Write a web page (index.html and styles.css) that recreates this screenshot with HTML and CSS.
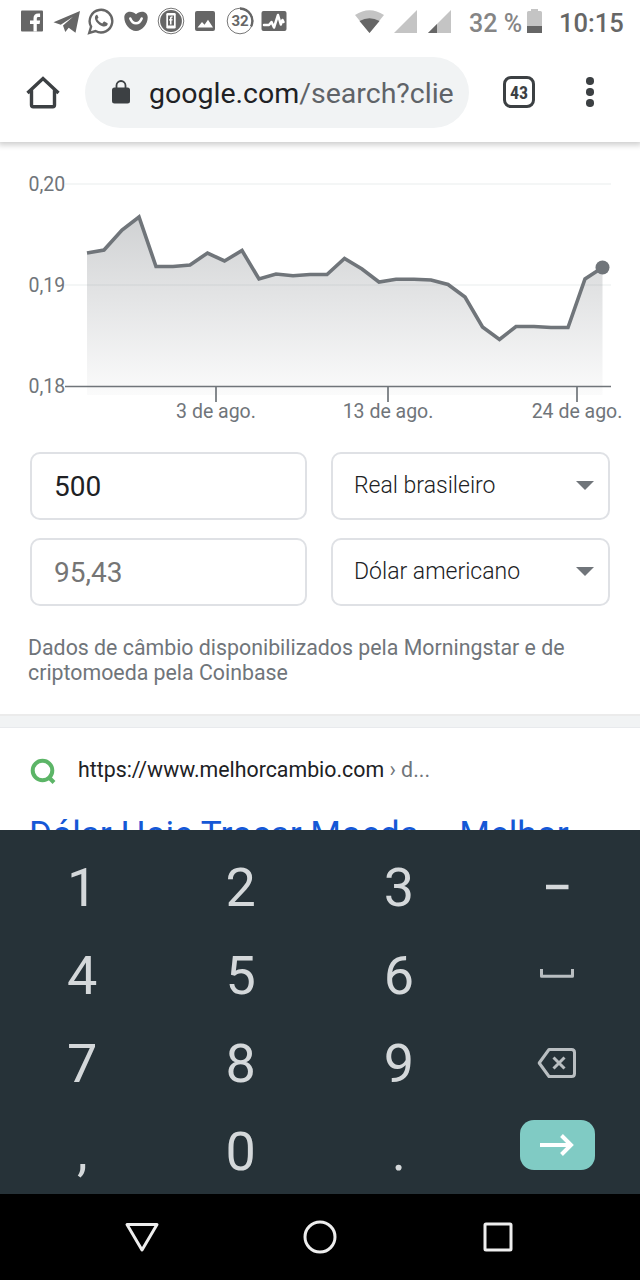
FILE: index.html
```
<!DOCTYPE html>
<html lang="pt-BR">
<head>
    <meta charset="UTF-8">
    <meta name="viewport" content="width=device-width, initial-scale=1.0">
    <title>Real brasileiro para Dólar americano</title>
    <link rel="stylesheet" href="styles.css">
</head>
<body>

<!-- Status bar -->
<div class="status-bar">
    <div class="notifications">
        <svg class="status-icon" viewBox="0 0 28 28">
            <rect x="3" y="3.500" width="22" height="21" rx="1"/>
            <path class="cut" d="M15.500 24.500V17H12v-3.500h3.500v-2.200c0-3.300 1.800-4.800 4.600-4.800h2V10h-1.600c-1.300 0-1.700.6-1.700 1.700v1.800h3.300l-.5 3.500h-2.800v7.500z"/>
        </svg>
        <svg class="status-icon" viewBox="0 0 28 28">
            <path d="M.5 15.200 27 4l-4.500 21.800-6.800-5-3.400 4.200-2.300-6.600L20 9.800 7.800 17.700z"/>
        </svg>
        <svg class="status-icon" viewBox="0 0 28 28">
            <path class="line" d="M2.200 26 4.100 19.600A11.300 11.300 0 1 1 8.500 24z"/>
            <path d="M9.800 7.800c-.5 0-1.900 1-1.900 3.200 0 2.400 2.200 5.100 4.500 6.800 2.500 1.800 5.200 2.200 6.800 1.300 1.300-.8 1.600-2 1.400-2.900l-3.200-1.600c-.5-.2-.7 0-1 .4l-1.100 1.400c-1.900-.5-4-2.200-5-4.300l1.200-1.600-1.300-2.700z"/>
        </svg>
        <svg class="status-icon" viewBox="0 0 28 28">
            <path d="M8 4.800c2.500 0 4.500 1 6 2.500 1.500-1.500 3.500-2.500 6-2.500 3.700 0 5.700 2.500 5.700 5.700C25.700 17.200 20 24 14 24S2.300 17.200 2.300 10.500C2.300 7.300 4.300 4.800 8 4.800z"/>
            <path class="cut-line" d="M8.300 11.500c1.300 3.300 3.200 4.800 5.700 4.800s4.400-1.500 5.700-4.800"/>
        </svg>
        <svg class="status-icon" viewBox="0 0 28 28">
            <circle class="thin" cx="14" cy="14" r="12.800"/>
            <circle cx="14" cy="14" r="10.900"/>
            <rect class="cut" x="9.300" y="6" width="9.400" height="15.500" rx="1.300"/>
            <rect x="11" y="8.500" width="6" height="10"/>
            <path class="cut" d="M13 17.500v-4h-1v-1.300h1V11c0-1.200.8-1.900 2.500-1.800v1.500c-.7 0-1 .1-1 .6v.9h1.200l-.2 1.300h-1v4z"/>
        </svg>
        <svg class="status-icon" viewBox="0 0 28 28">
            <rect x="4" y="4" width="20" height="20" rx="2"/>
            <path class="cut" d="M6.500 20.500 11 15l2.500 2.800 3.500-5 5 7.700z"/>
        </svg>
        <svg class="status-icon" viewBox="0 0 28 28">
            <circle class="thin" cx="14" cy="14" r="12.800"/>
            <path class="line" d="M14 1.500A12.500 12.500 0 0 1 25 19.500"/>
            <text class="badge-text" x="14" y="19.300">32</text>
        </svg>
        <svg class="status-icon" viewBox="0 0 28 28">
            <rect x="1.500" y="4" width="25" height="20" rx="2"/>
            <path class="cut-line" d="M4 18h5l2.500-3 2.500 5.500L18 8l2.800 9.500 1.700-4.500 1 2"/>
        </svg>
    </div>
    <div class="system">
        <svg class="wifi" viewBox="0 0 29 24">
            <path class="pale" d="M0 5Q14.500-4.500 29 5L14.500 23z"/>
            <path d="M4.500 11Q14.500 5.500 24.500 11L14.500 23z"/>
        </svg>
        <svg class="signal" viewBox="0 0 23 23"><path class="pale" d="M23 0v23H0z"/></svg>
        <svg class="signal" viewBox="0 0 23 23"><path class="pale" d="M23 0v23H0z"/><path d="M9 14v9H0z"/></svg>
        <span class="battery-text">32 %</span>
        <svg class="battery" viewBox="0 0 15 24">
            <path class="pale" d="M4 0h7v2h2.500Q15 2 15 3.500V17H0V3.500Q0 2 1.500 2H4z"/>
            <path d="M0 17h15v7H0z"/>
        </svg>
        <span class="clock">10:15</span>
    </div>
</div>

<!-- Browser toolbar -->
<div class="toolbar">
    <svg class="home" viewBox="0 0 34 34"><path d="M1.500 18 17 3.500 32.500 18M5.500 15v15q0 1.700 1.700 1.700h19.600q1.700 0 1.700-1.700V15"/></svg>
    <div class="address">
        <svg class="lock" viewBox="0 0 18 24">
            <rect x="0" y="7.500" width="18" height="16" rx="2.500"/>
            <path d="M4.500 8V5.500a4.500 4.500 0 0 1 9 0V8"/>
        </svg>
        <span class="url"><b>google.com</b>/search?clie</span>
    </div>
    <div class="tabs">43</div>
    <div class="menu"><i></i><i></i><i></i></div>
</div>

<!-- Page content -->
<div class="content">
    <svg class="chart" viewBox="0 142 640 290">
        <defs>
            <linearGradient id="fade" x1="0" y1="217" x2="0" y2="395" gradientUnits="userSpaceOnUse">
                <stop offset="0" stop-color="#70757a" stop-opacity=".33"/>
                <stop offset="1" stop-color="#70757a" stop-opacity=".03"/>
            </linearGradient>
        </defs>
        <path class="grid-line" d="M65 184H611M65 285H611"/>
        <path fill="url(#fade)" d="M87 395V253L104 250 122 230 139 217 156 266.500 173 266.500 190 265 207.500 253 224.500 261 242 250.500 259 279 276 274 293 275.800 310 274.500 327 274.500 344.500 258.500 362 269 379 282 396 279.300 414 279.300 431 280 448 284.500 465 297 482.500 327 499.500 339.500 516 326.500 534 326.500 551 327.500 568 327.500 585 279 602.500 267.500V395z"/>
        <path class="axis" d="M65 386.500H611M216 386.500V402M388 386.500V402M577 386.500V402"/>
        <polyline class="rate" points="87,253 104,250 122,230 139,217 156,266.500 173,266.500 190,265 207.500,253 224.500,261 242,250.500 259,279 276,274 293,275.800 310,274.500 327,274.500 344.500,258.500 362,269 379,282 396,279.300 414,279.300 431,280 448,284.500 465,297 482.500,327 499.500,339.500 516,326.500 534,326.500 551,327.500 568,327.500 585,279 602.500,267.500"/>
        <circle class="dot" cx="602.500" cy="267.500" r="7"/>
        <text x="28.500" y="190.500">0,20</text>
        <text x="28.500" y="292">0,19</text>
        <text x="28.500" y="393">0,18</text>
        <text class="date" x="216" y="418">3 de ago.</text>
        <text class="date" x="388" y="418">13 de ago.</text>
        <text class="date" x="577" y="418">24 de ago.</text>
    </svg>

    <!-- Converter -->
    <div class="converter">
        <div class="field amount">500</div>
        <div class="field currency">Real brasileiro <span class="arrow"></span></div>
        <div class="field amount result">95,43</div>
        <div class="field currency">Dólar americano <span class="arrow"></span></div>
    </div>
    <p class="source">Dados de câmbio disponibilizados pela Morningstar e de<br>criptomoeda pela Coinbase</p>

    <div class="divider"></div>

    <!-- First search result -->
    <div class="site">
        <svg class="favicon" viewBox="0 0 26 26"><circle cx="12.500" cy="12.500" r="9.800"/><path d="m18 18.500 6 6"/></svg>
        <span class="site-url">https://www.melhorcambio.com <small>› d...</small></span>
    </div>
    <div class="site-title">Dólar Hoje Trocar Moeda – Melhor</div>
</div>

<!-- Numeric keyboard -->
<div class="keyboard">
    <div class="key">1</div>
    <div class="key">2</div>
    <div class="key">3</div>
    <div class="key"><svg width="40" height="32" viewBox="0 0 40 32"><path d="M9 16h22.500" stroke-width="4.500"/></svg></div>
    <div class="key">4</div>
    <div class="key">5</div>
    <div class="key">6</div>
    <div class="key"><svg width="40" height="32" viewBox="0 0 40 32"><path class="dim" d="M4.500 10v7.200h31V10"/></svg></div>
    <div class="key">7</div>
    <div class="key">8</div>
    <div class="key">9</div>
    <div class="key"><svg width="40" height="32" viewBox="0 0 40 32"><path class="dim" d="M12 2.500h22.500q3 0 3 3v21q0 3-3 3H12L2.200 16zM16.500 10.500l11 11M27.500 10.500l-11 11"/></svg></div>
    <div class="key">,</div>
    <div class="key">0</div>
    <div class="key">.</div>
    <div class="key"><div class="enter"><svg width="40" height="30" viewBox="0 0 40 30"><path d="M3 15h31M24.500 5.500 34 15l-9.500 9.500"/></svg></div></div>
</div>

<!-- Android navigation -->
<div class="nav-bar">
    <svg viewBox="0 0 36 36"><path d="M3 5.500h30L18 31z"/></svg>
    <svg viewBox="0 0 36 36"><circle cx="18" cy="18" r="15"/></svg>
    <svg viewBox="0 0 36 36"><rect x="5" y="5" width="26" height="26" rx="1"/></svg>
</div>

</body>
</html>
```
FILE: styles.css
```
* {
    box-sizing: border-box;
}
body {
    margin: 0;
    width: 640px;
    height: 1280px;
    overflow: hidden;
    display: flex;
    flex-direction: column;
    background-color: #fff;
    font-family: Roboto, sans-serif;
}
svg {
    display: block;
    flex: none;
}

/* Status bar */
.status-bar {
    height: 42px;
    flex: none;
    display: flex;
    justify-content: space-between;
    padding: 0 18px 0 15px;
    color: #666;
    fill: #666;
}
.notifications {
    display: grid;
    grid-template-columns: repeat(8, 34.600px);
    justify-items: center;
    align-items: center;
}
.status-icon {
    width: 28px;
    height: 28px;
}
.cut {
    fill: #fff;
}
.cut-line {
    fill: none;
    stroke: #fff;
    stroke-width: 2.500;
    stroke-linecap: round;
    stroke-linejoin: round;
}
.line {
    fill: none;
    stroke: #666;
    stroke-width: 2.400;
}
.thin {
    fill: none;
    stroke: #777;
    stroke-width: 1;
}
.badge-text {
    font-size: 15px;
    font-weight: 700;
    text-anchor: middle;
}
.pale {
    fill: #c4c4c4;
}
.system {
    display: flex;
    align-items: center;
    padding-top: 1px;
}
.wifi {
    width: 29px;
    height: 24px;
    margin-right: 10px;
}
.signal {
    width: 23px;
    height: 23px;
    margin-right: 11px;
}
.battery-text {
    width: 58px;
    padding: 3px 0 0 7px;
    font-size: 25px;
    color: #858585;
    font-weight: 500;
    white-space: nowrap;
}
.battery {
    width: 15px;
    height: 24px;
    margin: 0 17px 2px 7px;
}
.clock {
    width: 63px;
    padding-top: 2px;
    font-size: 25.500px;
    font-weight: 500;
    white-space: nowrap;
}

/* Toolbar */
.toolbar {
    height: 100px;
    flex: none;
    display: flex;
    align-items: center;
    padding-left: 26px;
    position: relative;
    background-color: #fff;
    box-shadow: 0 1px 6px 2px rgba(0, 0, 0, 0.2);
    clip-path: inset(0 0 -14px 0);
}
.home {
    width: 34px;
    height: 34px;
    margin-right: 25px;
    fill: none;
    stroke: #3c4043;
    stroke-width: 3.400;
}
.address {
    width: 384px;
    height: 71px;
    border-radius: 36px;
    background-color: #f1f3f4;
    display: flex;
    align-items: center;
    padding-left: 27px;
}
.lock {
    width: 18px;
    height: 24px;
    margin-right: 19px;
    fill: #3c4043;
}
.lock path {
    fill: none;
    stroke: #3c4043;
    stroke-width: 1.800;
}
.url {
    padding-top: 2px;
    font-size: 28.500px;
    color: #5f6368;
    white-space: nowrap;
}
.url b {
    font-weight: 400;
    color: #202124;
}
.tabs {
    width: 32px;
    height: 32px;
    margin-left: 34px;
    border: 3px solid #3c4043;
    border-radius: 8px;
    font-family: "Roboto Condensed", Roboto, sans-serif;
    font-size: 18px;
    font-weight: 700;
    line-height: 27px;
    text-align: center;
    color: #3c4043;
}
.menu {
    display: grid;
    gap: 3.500px;
    margin-left: 51px;
}
.menu i {
    width: 7.500px;
    height: 7.500px;
    border-radius: 50%;
    background-color: #3c4043;
}

/* Chart */
.content {
    height: 688px;
    flex: none;
    overflow: hidden;
}
.chart {
    width: 640px;
    height: 290px;
    font-size: 19.500px;
    fill: #70757a;
}
.grid-line {
    stroke: #f1f3f4;
    stroke-width: 1.500;
}
.axis {
    fill: none;
    stroke: #70757a;
    stroke-width: 1.700;
}
.rate {
    fill: none;
    stroke: #70757a;
    stroke-width: 3.600;
}
.date {
    text-anchor: middle;
}

/* Converter */
.converter {
    display: grid;
    grid-template-columns: 277px 279px;
    grid-auto-rows: 68px;
    gap: 18px 24px;
    padding: 20px 30px 0;
}
.field {
    border: 2px solid #dfe1e5;
    border-radius: 10px;
    display: flex;
    align-items: center;
    justify-content: space-between;
    padding: 0 14px 0 22px;
}
.amount {
    font-size: 28px;
    color: #202124;
}
.result {
    color: #757575;
}
.currency {
    font-size: 23px;
    font-weight: 300;
    color: #202124;
    padding-left: 21px;
    padding-bottom: 1px;
}
.arrow {
    border: 9px solid transparent;
    border-top-color: #70757a;
    border-bottom: 0;
}
.source {
    margin: 29px 0 0 28px;
    font-size: 21.330px;
    line-height: 25px;
    color: #70757a;
    white-space: nowrap;
}
.divider {
    height: 14px;
    margin-top: 29px;
    background-color: #f1f3f4;
    border-top: 2px solid #ebebeb;
    border-bottom: 1px solid #e8eaed;
}

/* Search result */
.site {
    display: flex;
    align-items: center;
    height: 26px;
    margin: 30px 0 0 30px;
}
.favicon {
    width: 26px;
    height: 26px;
    margin-right: 22px;
    fill: none;
    stroke: #5cb567;
    stroke-width: 4;
}
.site-url {
    padding-bottom: 3px;
    font-size: 21.330px;
    color: #202124;
    white-space: nowrap;
}
.site-url small {
    font-size: inherit;
    color: #70757a;
}
.site-title {
    margin: 30px 0 0 29px;
    font-size: 35.200px;
    line-height: 40px;
    color: #1558d6;
    white-space: nowrap;
}

/* Keyboard */
.keyboard {
    height: 364px;
    flex: none;
    display: grid;
    grid-template-columns: repeat(4, 158.400px);
    grid-auto-rows: 88.200px;
    padding: 13.500px 3px 0;
    background-color: #263238;
    overflow: hidden;
}
.key {
    display: flex;
    align-items: center;
    justify-content: center;
    font-size: 54px;
    line-height: 60px;
    color: #d4d8da;
}
.key svg {
    margin-bottom: 2px;
    fill: none;
    stroke: #d4d8da;
    stroke-width: 3;
    stroke-linejoin: round;
}
.key .dim {
    stroke: #b9bec1;
}
.enter {
    width: 75px;
    height: 50px;
    margin-bottom: 14px;
    border-radius: 14px;
    background-color: #80cbc4;
    display: flex;
    align-items: center;
    justify-content: center;
}
.enter svg {
    margin-bottom: 0;
    stroke: #fff;
    stroke-width: 4;
    stroke-linejoin: miter;
}

/* Navigation bar */
.nav-bar {
    height: 86px;
    flex: none;
    display: grid;
    grid-template-columns: repeat(3, 178px);
    justify-content: center;
    justify-items: center;
    align-items: center;
    background-color: #000;
}
.nav-bar svg {
    width: 36px;
    height: 36px;
    fill: none;
    stroke: #eee;
    stroke-width: 3;
    stroke-linejoin: round;
}
```
